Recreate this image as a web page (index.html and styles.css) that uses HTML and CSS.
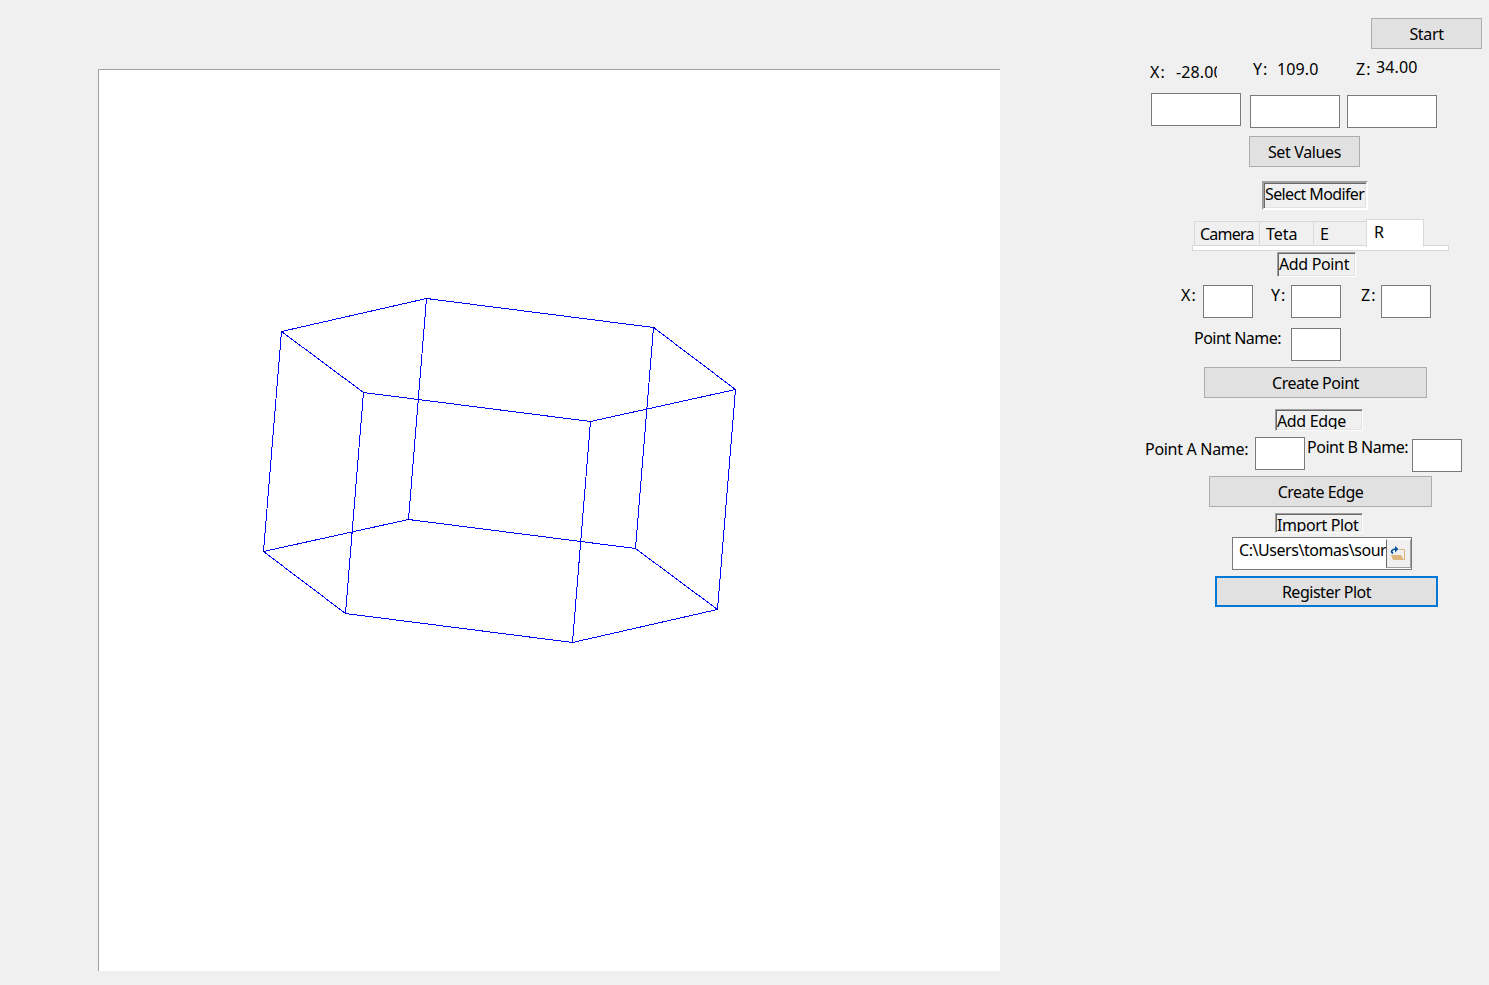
FILE: index.html
```html
<!DOCTYPE html>
<html lang="en">
<head>
<meta charset="utf-8">
<title>Plot</title>
<link rel="stylesheet" href="styles.css">
</head>
<body>
<main class="window">
  <svg class="plot" width="902" height="902" viewBox="98 69 902 902">
    <g class="edges">
      <path d="M281.500 331.500L426.500 298.500L653.500 327.500L735.500 389.500L590.500 421.500L363.500 392.500Z"/>
      <path d="M263.500 551.500L408.500 519.500L635.500 548.500L717.500 609.500L572.500 642.500L345.500 613.500Z"/>
      <path d="M281.500 331.500L263.500 551.500M426.500 298.500L408.500 519.500M653.500 327.500L635.500 548.500M735.500 389.500L717.500 609.500M590.500 421.500L572.500 642.500M363.500 392.500L345.500 613.500"/>
    </g>
    <path class="points" d="M281 331h2v1h-2zM426 298h1v1h-1zM653 327h2v1h-2zM735 389h1v1h-1zM590 421h1v1h-1zM363 392h1v1h-1zM263 551h2v1h-2zM408 519h1v1h-1zM635 548h1v1h-1zM717 609h1v1h-1zM572 642h1v1h-1zM345 613h1v1h-1z"/>
  </svg>
  <section class="panel">
    <div class="row start-row"><button class="btn small start">Start</button></div>
    <div class="row values-row">
      <span class="axis vx-label">X:</span><span class="num vx">-28.00</span>
      <span class="axis vy-label">Y:</span><span class="num vy">109.0</span>
      <span class="axis vz-label">Z:</span><span class="num vz">34.00</span>
    </div>
    <div class="row inputs-row"><i class="field wide"></i><i class="field wide second"></i><i class="field wide third"></i></div>
    <div class="row set-row"><button class="btn small set-values">Set Values</button></div>
    <div class="row modifier-row"><div class="frame modifier"><span>Select Modifer</span></div></div>
    <nav class="tabs">
      <span class="tab camera">Camera</span><span class="tab teta">Teta</span><span class="tab e">E</span><span class="tab active">R</span>
    </nav>
    <div class="pane"></div>
    <div class="frame add-point"><span>Add Point</span></div>
    <div class="row point-row">
      <span class="axis px">X:</span><i class="field"></i>
      <span class="axis py">Y:</span><i class="field"></i>
      <span class="axis pz">Z:</span><i class="field"></i>
    </div>
    <div class="row name-row"><span class="point-name">Point Name:</span><i class="field"></i></div>
    <button class="btn create-point">Create Point</button>
    <div class="frame add-edge"><span>Add Edge</span></div>
    <div class="row edge-row">
      <span class="point-a">Point A Name:</span><i class="field"></i>
      <span class="point-b">Point B Name:</span><i class="field field-b"></i>
    </div>
    <button class="btn create-edge">Create Edge</button>
    <div class="frame import-plot"><span>Import Plot</span></div>
    <div class="file"><span class="path">C:\Users\tomas\sour</span><span class="browse">
      <svg width="16" height="16" viewBox="0 0 16 16"><path d="M9 3.500H14.500V14" fill="none" stroke="#dcb67a"/><path d="M1 9h10l3 5H3z" fill="#dcb67a"/><path d="M3 7.500C.5 6 1.500 3 6 3" fill="none" stroke="#00539c" stroke-width="1.700"/><path d="M5 0l3.500 3L5 6.500z" fill="#00539c"/></svg>
    </span></div>
    <button class="btn register">Register Plot</button>
  </section>
</main>
</body>
</html>
```
FILE: styles.css
```css
* { box-sizing: border-box; }
body { margin: 0; background: #f0f0f0; color: #000; font: 16px/20px "Noto Sans", sans-serif; letter-spacing: -0.48px; overflow: hidden; }
.window { display: flex; align-items: flex-start; width: 1489px; height: 985px; }
.plot { flex: none; margin: 69px 0 0 98px; background: #fff; box-shadow: inset 1px 1px #a0a0a0; }
.edges { fill: none; stroke: #00f; stroke-width: 1; shape-rendering: crispEdges; }
.points { fill: #000060; shape-rendering: crispEdges; }
.panel { display: flex; flex-direction: column; align-items: flex-start; width: 349px; margin-left: 140px; padding-top: 18px; white-space: nowrap; }
.row { display: flex; align-items: flex-start; }
.btn { flex: none; width: 223px; height: 31px; padding: 0; border: 1px solid #adadad; background: #e1e1e1; color: #000; font: inherit; letter-spacing: inherit; text-align: center; }
.small { width: 111px; }
.start, .set-values { letter-spacing: -0.35px; }
.field { flex: none; width: 50px; height: 33px; background: #fff; border: 1px solid #7a7a7a; }
.wide { width: 90px; }
.axis { letter-spacing: 1px; }
.num { letter-spacing: 0.1px; }
.start-row { height: 31px; margin-left: 231px; }
.values-row { height: 44px; padding: 8px 0 0 10px; }
.vx-label { width: 26px; margin-top: 5px; }
.vx { width: 41px; margin-top: 5px; overflow: hidden; }
.vy-label { width: 24px; margin: 2px 0 0 36px; }
.vy { width: 50px; margin-top: 2px; }
.vz-label { width: 20px; margin: 2px 0 0 29px; }
.inputs-row { height: 43px; margin-left: 11px; }
.second { margin: 2px 0 0 9px; }
.third { margin: 2px 0 0 7px; }
.set-row { height: 45px; margin-left: 109px; }
.modifier-row { height: 38px; margin-left: 122px; }
.frame { border: 1px solid; border-color: #a0a0a0 #fff #fff #a0a0a0; box-shadow: inset 1px 1px #696969, inset -1px -1px #e3e3e3; padding-left: 1px; overflow: hidden; }
.frame span { display: block; }
.modifier { width: 106px; height: 29px; border-width: 2px; padding: 1px 0 0 1px; letter-spacing: -0.62px; }
.tabs { display: flex; align-items: flex-end; height: 27px; margin-left: 54px; }
.tab { height: 25px; border: 1px solid #d9d9d9; border-width: 1px 0 0 1px; padding: 2px 0 0 5px; }
.camera { width: 65px; letter-spacing: -0.75px; }
.teta { width: 54px; padding-left: 6px; letter-spacing: 0; }
.e { width: 53px; padding-left: 6px; }
.active { position: relative; width: 58px; height: 28px; margin-bottom: -1px; border-right-width: 1px; background: #fff; padding-left: 7px; }
.pane { width: 257px; height: 6px; margin: -1px 0 0 52px; border: 1px solid #d9d9d9; background: #fff; }
.add-point { width: 79px; height: 25px; margin: 1px 0 0 137px; padding-top: 1px; letter-spacing: -0.35px; }
.point-row { height: 33px; margin: 8px 0 0 41px; }
.px { width: 22px; }
.py { width: 20px; margin-left: 18px; }
.pz { width: 20px; margin-left: 20px; }
.name-row { margin: 10px 0 0 54px; }
.point-name { width: 97px; letter-spacing: -0.53px; }
.create-point { margin: 6px 0 0 64px; }
.add-edge { width: 88px; height: 22px; margin: 11px 0 0 135px; padding-top: 1px; letter-spacing: -0.35px; }
.add-edge span { height: 18px; overflow: hidden; }
.edge-row { height: 36px; margin: 6px 0 0 5px; }
.point-a { width: 110px; margin-top: 2px; letter-spacing: -0.3px; }
.point-b { width: 105px; margin-left: 2px; }
.field-b { margin-top: 2px; }
.create-edge { margin: 3px 0 0 69px; }
.import-plot { width: 88px; height: 20px; margin: 6px 0 0 135px; padding-top: 1px; letter-spacing: -0.4px; }
.import-plot span { height: 17px; overflow: hidden; }
.file { display: flex; width: 180px; height: 33px; margin: 4px 0 0 92px; border: 1px solid #7a7a7a; background: #fff; }
.path { width: 153px; padding: 2px 0 0 6px; overflow: hidden; letter-spacing: -0.45px; }
.browse { display: flex; align-items: center; justify-content: center; width: 25px; height: 29px; margin-top: 1px; padding-right: 2px; background: #f0f0f0; border: 1px solid; border-color: #fff #a0a0a0 #a0a0a0 #696969; }
.register { margin: 6px 0 0 75px; border: 2px solid #0078d7; }
```
